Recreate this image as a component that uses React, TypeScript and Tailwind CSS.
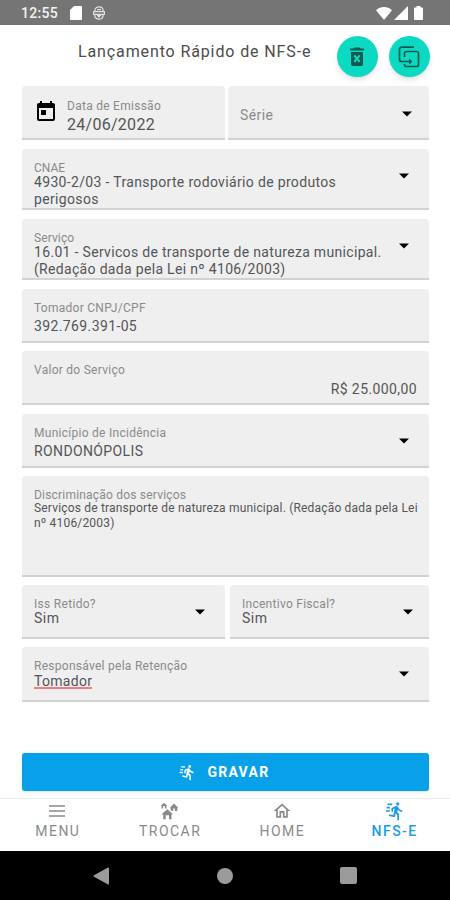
import React from 'react';

const runPath =
  'M16.5,5.5A2,2 0 0,0 18.5,3.5A2,2 0 0,0 16.5,1.5A2,2 0 0,0 14.5,3.5A2,2 0 0,0 16.5,5.5M12.9,19.4L13.9,15L16,17V23H18V15.5L15.9,13.5L16.5,10.5C17.89,12.09 19.89,13 22,13V11C20.24,11.03 18.6,10.11 17.7,8.6L16.7,7C16.34,6.4 15.7,6 15,6C14.7,6 14.5,6.1 14.2,6.1L9,8.3V13H11V9.6L12.8,8.9L11.2,17L6.3,16L5.9,18L12.9,19.4M4,9A1,1 0 0,1 3,8A1,1 0 0,1 4,7H7V9H4M5,5A1,1 0 0,1 4,4A1,1 0 0,1 5,3H10V5H5M3,13A1,1 0 0,1 2,12A1,1 0 0,1 3,11H7V13H3Z';

function Icon({ d, className }: { d: string; className: string }) {
  return (
    <svg viewBox="0 0 24 24" fill="currentColor" className={className}>
      <path d={d} />
    </svg>
  );
}

function Caret({ className }: { className: string }) {
  return (
    <svg viewBox="0 0 10 6" className={`h-[6px] w-[10px] shrink-0 text-black ${className}`} fill="currentColor">
      <path d="M0 0.5h10L5 5.5z" />
    </svg>
  );
}

type FieldProps = {
  label: string;
  className: string;
  labelClass?: string;
  caret?: string;
  children?: React.ReactNode;
};

function Field({ label, className, labelClass = 'tracking-[0.27px]', caret, children }: FieldProps) {
  return (
    <div className={`flex rounded-t-[4px] border-b-2 border-[#d2d2d2] bg-[#efefef] pl-3 ${className}`}>
      <div className="min-w-0 flex-1">
        <div className={`mt-[12px] text-[12px] leading-[14px] text-[#8a8a8a] ${labelClass}`}>{label}</div>
        {children}
      </div>
      {caret && <Caret className={caret} />}
    </div>
  );
}

export default function App() {
  return (
    <div
      className="flex h-[900px] w-[450px] flex-col overflow-hidden bg-white text-[#555]"
      style={{ fontFamily: 'Roboto, sans-serif' }}
    >
      {/* Status bar */}
      <div className="flex h-[25px] shrink-0 items-center bg-[#757575] pl-[21px] pr-[27px] pt-[1px] text-[#f2f2f2]">
        <span className="w-[37px] text-[14px] font-medium leading-4 tracking-[0.3px]">12:55</span>
        <svg viewBox="0 0 12 14" className="ml-[12px] h-[14px] w-[12px]" fill="#fff">
          <path d="M4 0h7a1 1 0 0 1 1 1v12a1 1 0 0 1-1 1H1a1 1 0 0 1-1-1V4z" />
        </svg>
        <svg viewBox="0 0 12 14" className="ml-[11px] h-[14px] w-[12px]" fill="none" stroke="#e0e0e0" strokeWidth="1.2">
          <path d="M1.800 5.200C1.800 2.400 3.500.8 6 .8s4.200 1.600 4.200 4.400M1.800 8.800c0 2.800 1.700 4.400 4.200 4.400s4.200-1.600 4.200-4.400M.6 5.600h10.800v2.800H.6zM4 3.600h4" />
          <path d="M3.500 9h5L6 12z" fill="#e0e0e0" stroke="none" />
        </svg>
        <svg viewBox="0 0 16 13" className="ml-auto h-[13px] w-[16px]" fill="#fff">
          <path d="M8 13 0 3.200C4.500-1 11.500-1 16 3.200z" />
        </svg>
        <svg viewBox="0 0 14 14" className="ml-[2px] h-[14px] w-[14px]" fill="#fff">
          <path d="M14 0v14H0z" />
        </svg>
        <svg viewBox="0 0 9 14" className="ml-[6px] h-[14px] w-[9px]" fill="#fff">
          <path d="M2.500 0h4v1.500H8a1 1 0 0 1 1 1V13a1 1 0 0 1-1 1H1a1 1 0 0 1-1-1V2.500a1 1 0 0 1 1-1h1.500z" />
        </svg>
      </div>

      {/* Title and actions */}
      <div className="flex h-[61px] shrink-0 pl-[78px] pr-[20.500px]">
        <h1 className="mt-[17px] whitespace-nowrap text-[16px] leading-5 tracking-[0.88px] text-[#4c4c4c]">
          Lançamento Rápido de NFS-e
        </h1>
        <div className="ml-auto mt-[11px] flex gap-[11px]">
          <button className="flex size-[41px] items-center justify-center rounded-full bg-[#0cd9c1] text-[#0b5b52] shadow-md">
            <svg viewBox="0 0 24 24" className="size-[24px]" fill="currentColor" fillRule="evenodd">
              <path d="M15.500 3.500l-1-1h-5l-1 1H5v2h14v-2zM6 7V19a2 2 0 0 0 2 2h8a2 2 0 0 0 2-2V7zM8.600 11.200 10 9.800l2 2.300 2-2.300 1.400 1.400-2 2.400 2 2.400L14 17.400l-2-2.300-2 2.300L8.600 16l2-2.400z" />
            </svg>
          </button>
          <button className="flex size-[41px] items-center justify-center rounded-full bg-[#0cd9c1] text-[#0b5b52] shadow-md">
            <svg viewBox="0 0 24 24" className="size-[24px]" fill="none" stroke="currentColor" strokeWidth="1.700" strokeLinejoin="round">
              <path d="M17 2.200H4.500a2 2 0 0 0-2 2v10.300a2 2 0 0 0 2 2H13" />
              <path d="M7.500 12V8.500a2 2 0 0 1 2-2h10a2 2 0 0 1 2 2v11a2 2 0 0 1-2 2h-10a2 2 0 0 1-2-2V19" />
              <path d="M12 13.500l3.500 3-3.500 3z" fill="currentColor" stroke="none" />
            </svg>
          </button>
        </div>
      </div>

      {/* Form */}
      <div className="flex shrink-0 flex-col pl-[22px] pr-[21px]">
        <div className="flex gap-[3px]">
          <div className="flex h-[54px] w-[203px] rounded-t-[4px] border-b-2 border-[#d2d2d2] bg-[#efefef] pl-[12px]">
            <Icon
              className="mt-[14px] size-[24px] text-black"
              d="M19 3h-1V1h-2v2H8V1H6v2H5c-1.110 0-1.990.9-1.990 2L3 19a2 2 0 0 0 2 2h14c1.100 0 2-.9 2-2V5c0-1.100-.9-2-2-2zm0 16H5V8h14v11zM7 10h5v5H7z"
            />
            <div className="ml-[9px]">
              <div className="mt-[13px] text-[12px] leading-[14px] tracking-[0.27px] text-[#8a8a8a]">Data de Emissão</div>
              <div className="mt-[3px] text-[16px] leading-[18px] tracking-[0.28px]">24/06/2022</div>
            </div>
          </div>
          <div className="flex h-[54px] flex-1 rounded-t-[4px] border-b-2 border-[#d2d2d2] bg-[#efefef] pl-[12px] pr-[17px]">
            <span className="mt-[20px] flex-1 text-[14px] leading-[18px] tracking-[0.4px] text-[#8a8a8a]">Série</span>
            <Caret className="mt-[25px]" />
          </div>
        </div>

        <Field label="CNAE" className="mt-[9px] h-[61px] pr-[20px]" labelClass="tracking-[0px]" caret="mt-[24px]">
          <div className="-mt-px text-[14px] leading-[17px] tracking-[0.34px]">
            4930-2/03 - Transporte rodoviário de produtos
            <br />
            perigosos
          </div>
        </Field>

        <Field label="Serviço" className="mt-[9px] h-[61px] pr-[20px]" labelClass="tracking-[0.1px]" caret="mt-[24px]">
          <div className="-mt-px whitespace-nowrap text-[14px] leading-[17px] tracking-[0.32px]">
            16.01 - Servicos de transporte de natureza municipal.
            <br />
            (Redação dada pela Lei nº 4106/2003)
          </div>
        </Field>

        <Field label="Tomador CNPJ/CPF" className="mt-[9px] h-[54px]">
          <div className="mt-[2px] text-[14px] leading-[18px] tracking-[0.38px]">392.769.391-05</div>
        </Field>

        <Field label="Valor do Serviço" className="mt-[8px] h-[54px] pr-[12px]">
          <div className="mt-[3px] text-right text-[14px] leading-[18px] tracking-[0.4px]">R$ 25.000,00</div>
        </Field>

        <Field label="Município de Incidência" className="mt-[9px] h-[54px] pr-[20px]" caret="mt-[24px]">
          <div className="mt-[2px] text-[14px] leading-[18px] tracking-[0.38px]">RONDONÓPOLIS</div>
        </Field>

        <Field label="Discriminação dos serviços" className="mt-[8px] h-[101px]" labelClass="tracking-[0.2px]">
          <div className="-mt-px whitespace-nowrap text-[12px] leading-[14.5px] tracking-[0.18px]">
            Serviços de transporte de natureza municipal. (Redação dada pela Lei
            <br />
            nº 4106/2003)
          </div>
        </Field>

        <div className="mt-[8px] flex gap-[5px]">
          <Field label="Iss Retido?" className="h-[54px] w-[203px] pr-[20px]" labelClass="tracking-[0.3px]" caret="mt-[24px]">
            <div className="-mt-px text-[14px] leading-[17px] tracking-[0.5px]">Sim</div>
          </Field>
          <Field label="Incentivo Fiscal?" className="h-[54px] flex-1 pr-[16px]" caret="mt-[24px]">
            <div className="-mt-px text-[14px] leading-[17px] tracking-[0.5px]">Sim</div>
          </Field>
        </div>

        <Field label="Responsável pela Retenção" className="mt-[8px] h-[55px] pr-[20px]" caret="mt-[24px]">
          <div className="h-[16px] w-fit border-b-2 border-[#f47c7c] text-[14px] leading-[16px] tracking-[0.3px]">Tomador</div>
        </Field>

        {/* Save Button */}
        <button className="mt-[51px] flex h-[38px] items-center rounded-[3px] bg-[#08a1e9] pl-[156px] text-white shadow">
          <Icon className="size-[17px]" d={runPath} />
          <span className="ml-[12.500px] text-[14px] font-bold leading-5 tracking-[1.25px]">GRAVAR</span>
        </button>
      </div>

      {/* Tabs */}
      <div className="mt-[7px] grid h-[53px] shrink-0 grid-cols-4 border-t border-[#ededed] pl-px text-[14px] leading-4 tracking-[1.45px] text-[#8a8a8a]">
        <div className="flex flex-col items-center gap-[2px] pt-[2px]">
          <svg viewBox="0 0 18 20" className="h-[20px] w-[18px]" stroke="currentColor" strokeWidth="1.4" fill="none">
            <path d="M1 5h16M1 10h16M1 15h16" />
          </svg>
          <span className="pl-[1.500px]">MENU</span>
        </div>
        <div className="flex flex-col items-center gap-[2px] pt-[2px]">
          <Icon
            className="size-[20px]"
            d="M17 16H15V22H12V17H8V22H5V16H3L10 10L17 16M6 2L10 6H9V9H7V6H5V9H3V6H2L6 2M18 3L23 8H22V12H19V9H17V12H15.340L14 10.870V8H13L18 3Z"
          />
          <span className="pl-[1.500px]">TROCAR</span>
        </div>
        <div className="flex flex-col items-center gap-[2px] pt-[2px]">
          <Icon
            className="size-[20px]"
            d="M12 5.690L17 10.190V18H15V12H9V18H7V10.190L12 5.690M12 3L2 12H5V20H11V14H13V20H19V12H22L12 3Z"
          />
          <span className="pl-[1.500px]">HOME</span>
        </div>
        <div className="flex flex-col items-center gap-[2px] pt-[2px] font-medium text-[#1c9bea]">
          <Icon className="size-[20px]" d={runPath} />
          <span className="pl-[1.500px]">NFS-E</span>
        </div>
      </div>

      {/* Android navigation */}
      <div className="flex flex-1 items-center bg-black pl-[93px] text-[#9b9b9b]">
        <svg viewBox="0 0 16 18" className="h-[18px] w-[16px]" fill="currentColor">
          <path d="M16 1v16a1 1 0 0 1-1 .5L.5 9.500v-1L15 .5a1 1 0 0 1 1 .5z" />
        </svg>
        <div className="ml-[108px] size-[16px] rounded-full bg-[#9b9b9b]" />
        <div className="ml-[107px] size-[17px] rounded-[2px] bg-[#9b9b9b]" />
      </div>
    </div>
  );
}
